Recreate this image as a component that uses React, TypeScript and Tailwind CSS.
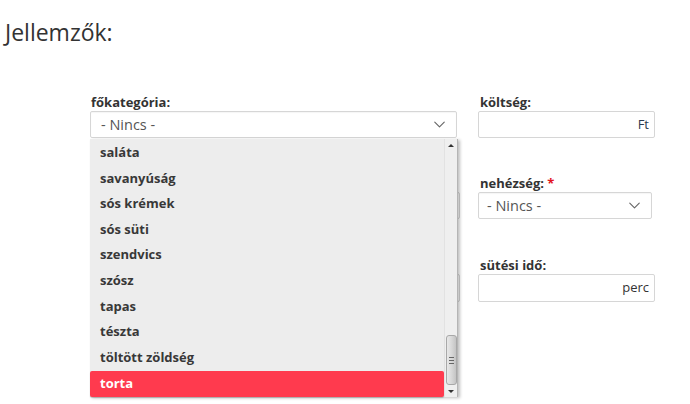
import { ChevronDown } from 'lucide-react'

const items = ['saláta', 'savanyúság', 'sós krémek', 'sós süti', 'szendvics', 'szósz', 'tapas', 'tészta', 'töltött zöldség', 'torta']

function Label({ text, required }: { text: string; required?: boolean }) {
  return (
    <div className="h-[18px] text-[13px] leading-[18px] font-bold text-[#333]">
      {text}
      {required && <span className="text-[#e3141e]"> *</span>}
    </div>
  )
}

function Select({ width, pad }: { width: string; pad: string }) {
  return (
    <div className={`${width} ${pad} h-[27px] flex items-center justify-between pr-[7px] bg-white border border-[#d6d6d6] rounded-[2px] shadow-[inset_0_1px_1px_rgba(0,0,0,0.04)]`}>
      <span className="text-[14.5px] text-[#555]">- Nincs -</span>
      <ChevronDown className="w-[19px] h-[19px] text-[#666]" strokeWidth={1.4} />
    </div>
  )
}

function Input({ unit }: { unit: string }) {
  return (
    <div className="w-[177px] h-[27px] flex items-center justify-end pr-[5px] bg-white border border-[#d6d6d6] rounded-[2px]">
      <span className="text-[13px] text-[#2b3a4f]">{unit}</span>
    </div>
  )
}

export default function App() {
  return (
    <div className="w-[690px] h-[404px] bg-white overflow-hidden" style={{ fontFamily: '"Open Sans", "Noto Sans", sans-serif' }}>
      <h1 className="pl-[5px] pt-[16px] text-[23px] leading-[32px] font-normal text-[#333]">Jellemzők:</h1>

      <div className="flex pl-[90px] pt-[45px]">
        {/* left column */}
        <div className="relative w-[367px]">
          <div className="pl-[1px]">
            <Label text="főkategória:" />
          </div>
          <Select width="w-[367px]" pad="pl-[10px]" />
          {/* fields hidden under the open list */}
          <div className="mt-[36px] h-[18px]" />
          <div className="w-[370px] h-[27px] bg-white border border-[#d6d6d6] rounded-[2px]" />
          <div className="mt-[37px] h-[18px]" />
          <div className="w-[370px] h-[28px] bg-white border border-[#d6d6d6] rounded-[2px]" />

          {/* open dropdown */}
          <div className="absolute left-0 top-[46px] w-[368px] h-[258px] flex bg-[#ededed] shadow-[2px_1px_3px_rgba(0,0,0,0.25)]">
            <div className="flex-1 flex flex-col pt-[1px]">
              {items.map((item) => (
                <div
                  key={item}
                  className={
                    item === 'torta'
                      ? 'h-[25.8px] mt-[1px] flex items-center pl-[10px] text-[13px] font-bold text-white bg-[#ff3a4e] rounded-[2px] shadow-[0_1px_1px_rgba(0,0,0,0.2)]'
                      : 'h-[25.8px] flex items-center pl-[10px] text-[13px] font-bold text-[#383838]'
                  }
                >
                  {item}
                </div>
              ))}
            </div>
            {/* scrollbar */}
            <div className="w-[14px] flex flex-col items-center bg-[#efefef] border-l border-[#e2e2e2] border-r border-r-[#b5b5b5]">
              <div className="h-[12px] flex items-center justify-center">
                <div className="w-0 h-0 border-l-[3px] border-r-[3px] border-b-[3px] border-l-transparent border-r-transparent border-b-[#333]" />
              </div>
              <div className="flex-1" />
              <div className="w-[11px] h-[50px] flex flex-col items-center justify-center gap-[2px] rounded-[3px] border border-[#a8a8a8] bg-gradient-to-r from-[#e8e8e8] via-[#d8d8d8] to-[#c4c4c4]">
                <div className="w-[5px] h-px bg-[#666]" />
                <div className="w-[5px] h-px bg-[#666]" />
                <div className="w-[5px] h-px bg-[#666]" />
              </div>
              <div className="h-[12px] flex items-center justify-center">
                <div className="w-0 h-0 border-l-[3px] border-r-[3px] border-t-[3px] border-l-transparent border-r-transparent border-t-[#333]" />
              </div>
            </div>
          </div>
        </div>

        {/* right column */}
        <div className="ml-[21px] w-[177px]">
          <div className="pl-[2px]">
            <Label text="költség:" />
          </div>
          <Input unit="Ft" />
          <div className="mt-[36px] pl-[2px]">
            <Label text="nehézség:" required />
          </div>
          <Select width="w-[174px]" pad="pl-[8px]" />
          <div className="mt-[37px] pl-[2px]">
            <Label text="sütési idő:" />
          </div>
          <div className="w-[177px] h-[28px] flex items-center justify-end pr-[5px] bg-white border border-[#d6d6d6] rounded-[2px]">
            <span className="text-[13px] text-[#333]">perc</span>
          </div>
        </div>
      </div>
    </div>
  )
}
